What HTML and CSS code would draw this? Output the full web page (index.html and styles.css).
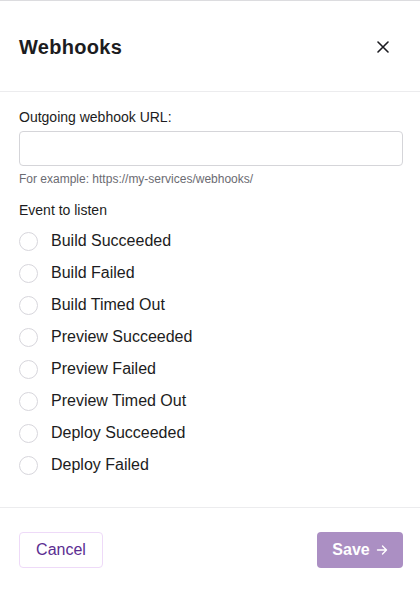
FILE: index.html
```html
<!DOCTYPE html>
<html>
<head>
<meta charset="utf-8">
<link rel="stylesheet" href="styles.css">
</head>
<body>
<div class="modal">
  <header class="modal-header">
    <h1 class="title">Webhooks</h1>
    <button class="close" aria-label="Close">
      <svg width="12" height="12" viewBox="0 0 12 12"><path d="M1 1L11 11M11 1L1 11" stroke="#1c1c21" stroke-width="1.6" stroke-linecap="round"/></svg>
    </button>
  </header>
  <section class="modal-body">
    <label class="field-label">Outgoing webhook URL:</label>
    <input class="text-input" type="text">
    <div class="help">For example: https://my-services/webhooks/</div>
    <div class="group-label">Event to listen</div>
    <ul class="options">
      <li class="option"><span class="radio"></span><span>Build Succeeded</span></li>
      <li class="option"><span class="radio"></span><span>Build Failed</span></li>
      <li class="option"><span class="radio"></span><span>Build Timed Out</span></li>
      <li class="option"><span class="radio"></span><span>Preview Succeeded</span></li>
      <li class="option"><span class="radio"></span><span>Preview Failed</span></li>
      <li class="option"><span class="radio"></span><span>Preview Timed Out</span></li>
      <li class="option"><span class="radio"></span><span>Deploy Succeeded</span></li>
      <li class="option"><span class="radio"></span><span>Deploy Failed</span></li>
    </ul>
  </section>
  <footer class="modal-footer">
    <button class="btn btn-cancel">Cancel</button>
    <button class="btn btn-save">Save <svg width="12" height="12" viewBox="0 0 12 12"><path d="M1.5 6H10.5M6.5 2L10.5 6L6.5 10" stroke="#fff" stroke-width="1.4" fill="none" stroke-linecap="round" stroke-linejoin="round"/></svg></button>
  </footer>
</div>
</body>
</html>
```

FILE: styles.css
```css
* { box-sizing: border-box; }
html, body { margin: 0; padding: 0; background: #fff; }
body {
  font-family: "Liberation Sans", Arial, sans-serif;
  color: #1c1c21;
}
.modal {
  width: 420px;
  border-top: 1px solid #dcdcdf;
}
.modal-header {
  height: 91px;
  display: flex;
  align-items: center;
  justify-content: space-between;
  padding: 0 19px 0 19px;
  border-bottom: 1px solid #ececee;
}
.title {
  margin: 0;
  font-size: 20px;
  font-weight: bold;
  line-height: 24px;
  padding-top: 2px;
  letter-spacing: 0.3px;
}
.close {
  border: none;
  background: none;
  padding: 0;
  width: 12px;
  height: 12px;
  margin-right: 12px;
  margin-top: 1px;
  display: flex;
}
.modal-body {
  padding: 15px 17px 26px 19px;
  display: flex;
  flex-direction: column;
}
.field-label {
  font-size: 14px;
  line-height: 20px;
  color: #1c1c21;
}
.text-input {
  margin-top: 4px;
  height: 35px;
  width: 384px;
  border: 1px solid #d5d5d9;
  border-radius: 4px;
  font-size: 14px;
  padding: 0 10px;
}
.help {
  margin-top: 5px;
  font-size: 12px;
  line-height: 16px;
  color: #6b6b72;
}
.group-label {
  margin-top: 13px;
  font-size: 14px;
  line-height: 20px;
}
.options {
  list-style: none;
  margin: 5px 0 0 0;
  padding: 0;
}
.option {
  height: 32px;
  display: flex;
  align-items: center;
  gap: 13px;
  font-size: 16px;
}
.radio {
  width: 19px;
  height: 19px;
  border: 1.5px solid #d7d6dc;
  border-radius: 50%;
  flex: none;
}
.modal-footer {
  border-top: 1px solid #ececee;
  padding: 24px 17px 24px 19px;
  display: flex;
  justify-content: space-between;
}
.btn {
  height: 36px;
  border-radius: 4px;
  font-family: "Liberation Sans", Arial, sans-serif;
  font-size: 16px;
  display: flex;
  align-items: center;
  gap: 6px;
  cursor: pointer;
}
.btn-cancel {
  background: #fff;
  border: 1px solid #eedaf8;
  color: #5b2d91;
  padding: 0 16px;
  width: 84px;
  justify-content: center;
}
.btn-save {
  background: #ab8fc3;
  border: none;
  color: #fff;
  font-weight: bold;
  width: 86px;
  justify-content: center;
}
```
